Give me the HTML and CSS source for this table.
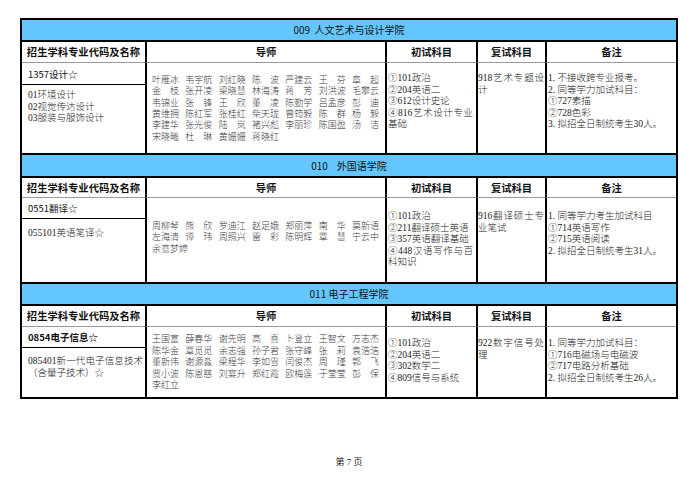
FILE: index.html
```html
<!DOCTYPE html>
<html lang="zh">
<head>
<meta charset="utf-8">
<title>招生专业目录</title>
<link rel="stylesheet" href="styles.css">
</head>
<body>
<div class="page">
  <div class="table">
    <section class="sec s1">
      <div class="band">009&nbsp;&nbsp;人文艺术与设计学院</div>
      <div class="th">招生学科专业代码及名称</div>
      <div class="th bl">导师</div>
      <div class="th bl">初试科目</div>
      <div class="th bl">复试科目</div>
      <div class="th bl">备注</div>
      <div class="code">1357设计☆</div>
      <div class="names bl">
        <span>叶雁冰</span><span>韦宇航</span><span>刘红晓</span><span>陈 波</span><span>严建云</span><span>王 芬</span><span>章 超</span>
        <span>金 枝</span><span>张开凌</span><span>梁晓慧</span><span>林海涛</span><span>蒋 芳</span><span>刘洪波</span><span>毛攀云</span>
        <span>韦锦业</span><span>张 锋</span><span>王 欣</span><span>董 凌</span><span>陈勤学</span><span>吕孟彦</span><span>彭 迪</span>
        <span>黄维拥</span><span>陈红军</span><span>张桂红</span><span>柴天珑</span><span>曾筠毅</span><span>陈 群</span><span>杨 毅</span>
        <span>李建华</span><span>张光俊</span><span>陆 岚</span><span>褚兴彪</span><span>李丽珍</span><span>陈国盈</span><span>汤 洁</span>
        <span>宋晓曦</span><span>杜 琳</span><span>黄姗姗</span><span>蒋晓红</span>
      </div>
      <div class="exam bl">
        <div>①101政治</div>
        <div>②204英语二</div>
        <div>③612设计史论</div>
        <div class="j">④816艺术设计专业</div>
        <div>基础</div>
      </div>
      <div class="retest bl">
        <div class="j">918艺术专题设</div>
        <div>计</div>
      </div>
      <div class="note bl">
        <div>1. 不接收跨专业报考。</div>
        <div>2. 同等学力加试科目：</div>
        <div>①727素描</div>
        <div>②728色彩</div>
        <div>3. 拟招全日制统考生30人。</div>
      </div>
      <div class="sub">
        <div>01环境设计</div>
        <div>02视觉传达设计</div>
        <div>03服装与服饰设计</div>
      </div>
    </section>

    <section class="sec s2">
      <div class="band">010&nbsp;&nbsp;&nbsp;&nbsp;外国语学院</div>
      <div class="th">招生学科专业代码及名称</div>
      <div class="th bl">导师</div>
      <div class="th bl">初试科目</div>
      <div class="th bl">复试科目</div>
      <div class="th bl">备注</div>
      <div class="code">0551翻译☆</div>
      <div class="names bl">
        <span>周柳琴</span><span>熊 欣</span><span>罗迪江</span><span>赵足娥</span><span>郑丽萍</span><span>南 华</span><span>莫新语</span>
        <span>左海清</span><span>谭 玮</span><span>周照兴</span><span>雷 彩</span><span>陈明辉</span><span>覃 慧</span><span>宁云中</span>
        <span class="wide">余意梦婷</span>
      </div>
      <div class="exam bl">
        <div>①101政治</div>
        <div>②211翻译硕士英语</div>
        <div>③357英语翻译基础</div>
        <div class="j">④448汉语写作与百</div>
        <div>科知识</div>
      </div>
      <div class="retest bl">
        <div class="j">916翻译硕士专</div>
        <div>业笔试</div>
      </div>
      <div class="note bl">
        <div>1. 同等学力考生加试科目</div>
        <div>①714英语写作</div>
        <div>②715英语阅读</div>
        <div>2. 拟招全日制统考生31人。</div>
      </div>
      <div class="sub">
        <div>055101英语笔译☆</div>
      </div>
    </section>

    <section class="sec s3">
      <div class="band">011&nbsp;电子工程学院</div>
      <div class="th">招生学科专业代码及名称</div>
      <div class="th bl">导师</div>
      <div class="th bl">初试科目</div>
      <div class="th bl">复试科目</div>
      <div class="th bl">备注</div>
      <div class="code strong">0854电子信息☆</div>
      <div class="names bl">
        <span>王国富</span><span>薛春华</span><span>谢先明</span><span>高 喜</span><span>卜登立</span><span>王智文</span><span>方志杰</span>
        <span>陈华金</span><span>覃觅觅</span><span>余志强</span><span>孙子君</span><span>张守峰</span><span>张 莉</span><span>袁浩浩</span>
        <span>董新伟</span><span>谢源淼</span><span>梁程华</span><span>李如雪</span><span>闫俊杰</span><span>周 瑾</span><span>郭 飞</span>
        <span>贾小波</span><span>陈恩慈</span><span>刘宴升</span><span>郑红霞</span><span>欧梅莲</span><span>于莹莹</span><span>彭 保</span>
        <span>李红立</span>
      </div>
      <div class="exam bl">
        <div>①101政治</div>
        <div>②204英语二</div>
        <div>③302数学二</div>
        <div>④809信号与系统</div>
      </div>
      <div class="retest bl">
        <div class="j">922数字信号处</div>
        <div>理</div>
      </div>
      <div class="note bl">
        <div>1. 同等学力加试科目：</div>
        <div>①716电磁场与电磁波</div>
        <div>②717电路分析基础</div>
        <div>2. 拟招全日制统考生26人。</div>
      </div>
      <div class="sub">
        <div class="j">085401新一代电子信息技术</div>
        <div>（含量子技术）☆</div>
      </div>
    </section>
  </div>
  <div class="footer">第 7 页</div>
</div>
</body>
</html>
```

FILE: styles.css
```css
* {
  box-sizing: border-box;
}

body {
  margin: 0;
  background: #ffffff;
}

.page {
  width: 700px;
  height: 478px;
  padding: 18px 0 0 20px;
  overflow: hidden;
}

.table {
  width: 658px;
  border: 2px solid #000;
}

.sec {
  display: grid;
  grid-template-columns: 123px 240px 91px 69px 131px;
  color: #222;
  font-family: "Liberation Serif", "Noto Sans CJK SC", serif;
  font-size: 9.5px;
  line-height: 11.5px;
}

.s1 {
  grid-template-rows: 20px 22px 22px 69px;
  --pt: 10px;
  --subpad: 5px;
  --namepb: 0px;
}

.s2 {
  grid-template-rows: 23px 21px 21px 64px;
  --pt: 13px;
  --subpad: 9px;
  --namepb: 6px;
}

.s3 {
  grid-template-rows: 22px 22px 21px 50px;
  --pt: 11px;
  --subpad: 8px;
  --namepb: 0px;
}

.band {
  grid-column: 1 / -1;
  background: #63c7fd;
  display: flex;
  align-items: center;
  justify-content: center;
  font-family: "Noto Sans CJK SC", sans-serif;
  font-size: 10px;
  line-height: 12px;
  color: #111;
  white-space: pre;
}

.s2 .band,
.s3 .band {
  border-top: 2px solid #000;
}

.th {
  border-top: 2px solid #000;
  display: flex;
  align-items: center;
  justify-content: center;
  font-family: "Noto Sans CJK SC", sans-serif;
  font-weight: 700;
  font-size: 10.3px;
  color: #111;
  white-space: nowrap;
}

.bl {
  border-left: 2px solid #000;
}

.code {
  grid-column: 1;
  grid-row: 3;
  border-top: 1px solid #9a9a9a;
  display: flex;
  align-items: center;
  padding: 2px 2px 0 6px;
  font-family: "Noto Sans CJK SC", sans-serif;
  font-size: 9.5px;
  color: #111;
}

.code.strong {
  font-weight: 700;
}

.sub {
  grid-column: 1;
  grid-row: 4;
  border-top: 1px solid #000;
  padding: var(--subpad) 2px 0 6px;
  font-weight: 300;
  white-space: nowrap;
}

.names {
  grid-column: 2;
  grid-row: 3 / 5;
  border-top: 1px solid #9a9a9a;
  display: grid;
  grid-template-columns: repeat(7, 27px);
  column-gap: 6.33px;
  align-content: center;
  padding: 0 0 var(--namepb) 5px;
  font-family: "Noto Sans CJK SC", serif;
  font-weight: 300;
  font-size: 9px;
  line-height: 11.4px;
  color: #3b3b45;
}

.names span {
  display: block;
  white-space: nowrap;
  text-align: justify;
  text-align-last: justify;
}

.names span.wide {
  grid-column: span 2;
  text-align: left;
  text-align-last: left;
}

.exam,
.retest,
.note {
  grid-row: 3 / 5;
  border-top: 1px solid #9a9a9a;
  padding-top: var(--pt);
  font-weight: 300;
  white-space: nowrap;
}

.exam {
  grid-column: 3;
  padding-left: 1px;
  padding-right: 3px;
}

.retest {
  grid-column: 4;
  padding-left: 0;
  padding-right: 1px;
}

.note {
  grid-column: 5;
  padding-left: 1px;
  padding-right: 2px;
}

.j {
  text-align: justify;
  text-align-last: justify;
}

.footer {
  width: 658px;
  margin-top: 58px;
  text-align: center;
  font-family: "Liberation Serif", "Noto Sans CJK SC", serif;
  font-size: 9px;
  line-height: 11px;
  color: #222;
}
```
